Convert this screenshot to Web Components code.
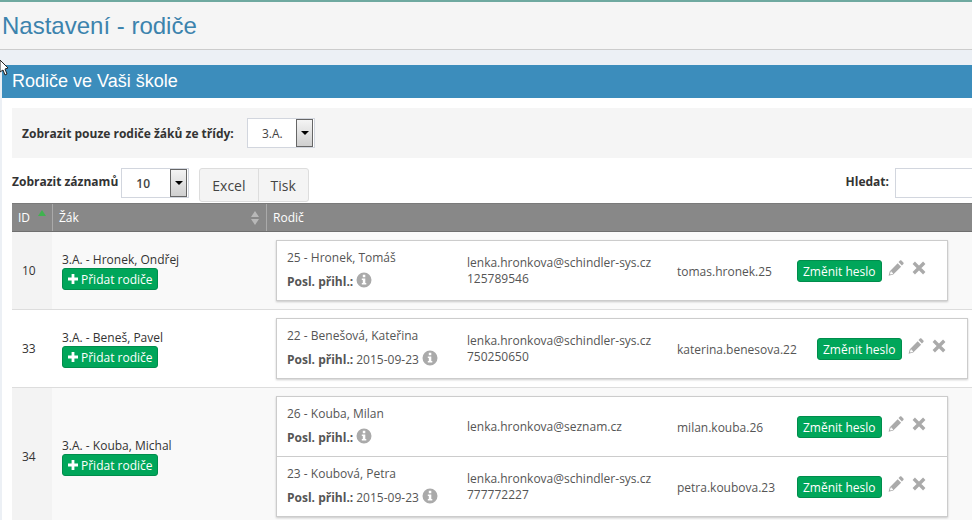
<!DOCTYPE html>
<html lang="cs">
<head>
<meta charset="utf-8">
<title>Nastavení - rodiče</title>
<style>
    html, body { margin: 0; height: 520px; overflow: hidden; background: #ecf0f5; }
    body { font: 12px "Open Sans", sans-serif; color: #333; position: relative; }
    .cursor { position: absolute; left: 0; top: 60px; z-index: 5; }
</style>
</head>
<body>
<svg class="cursor" width="10" height="18" viewBox="0 0 10 18"><path d="M0 0 L8 8 L5 9 L7 14 L5 15 L3 10 L0 12 Z" fill="#fff" stroke="#222" stroke-width="1"/></svg>
<page-title>Nastavení - rodiče</page-title>
<box-panel heading="Rodiče ve Vaši škole">
    <filter-bar label="Zobrazit pouze rodiče žáků ze třídy:" value="3.A."></filter-bar>
    <table-tools></table-tools>
    <parents-table>
        <student-row id-text="10" name="3.A. - Hronek, Ondřej" tone="odd">
            <parent-card login-width="120">
                <parent-line name="25 - Hronek, Tomáš" email="lenka.hronkova@schindler-sys.cz" phone="125789546" login="tomas.hronek.25"></parent-line>
            </parent-card>
        </student-row>
        <student-row id-text="33" name="3.A. - Beneš, Pavel" tone="even">
            <parent-card login-width="140">
                <parent-line name="22 - Benešová, Kateřina" last="2015-09-23" email="lenka.hronkova@schindler-sys.cz" phone="750250650" login="katerina.benesova.22"></parent-line>
            </parent-card>
        </student-row>
        <student-row id-text="34" name="3.A. - Kouba, Michal" tone="odd">
            <parent-card login-width="120">
                <parent-line name="26 - Kouba, Milan" email="lenka.hronkova@seznam.cz" login="milan.kouba.26"></parent-line>
                <parent-line name="23 - Koubová, Petra" last="2015-09-23" email="lenka.hronkova@schindler-sys.cz" phone="777772227" login="petra.koubova.23" divided></parent-line>
            </parent-card>
        </student-row>
    </parents-table>
</box-panel>

<script>
// shared icon markup
const ICONS = {
    plus: '<svg width="10" height="10" viewBox="0 0 10 10"><path d="M3.6 0h2.8v3.6H10v2.8H6.4V10H3.6V6.4H0V3.6h3.6z" fill="#fff"/></svg>',
    info: '<svg width="16" height="16" viewBox="0 0 16 16"><path fill-rule="evenodd" fill="#aaa" d="M8 .5a7.5 7.5 0 1 1 0 15a7.5 7.5 0 0 1 0-15zM6.800 2.800v2.400h2.500V2.800zM5.800 6.400v1.500h1v3H5.800v1.500h4.500v-1.500h-1V6.400z"/></svg>',
    pencil: '<svg width="16" height="16" viewBox="0 0 16 16"><path fill="#aaa" d="M12 .6c.5-.4 1-.4 1.400 0l2 2c.4.4.4.9 0 1.400l-1.500 1.500-3.400-3.400zM9.700 3.300l3.400 3.400-7.900 7.900-4.600 1.200 1.200-4.600zM2.700 11.400l-.7 2.600.5.500 2.600-.7-.3-1.100-1-.1-.1-1z"/></svg>',
    times: '<svg width="14" height="14" viewBox="0 0 14 14"><path d="M2.400 2.400l9.200 9.200M11.600 2.400l-9.200 9.200" stroke="#aaa" stroke-width="3.800" stroke-linecap="square" fill="none" transform="translate(7 7) scale(.88) translate(-7 -7)"/></svg>'
};

class PageTitle extends HTMLElement {
    constructor() {
        super();
        this.attachShadow({ mode: 'open' }).innerHTML = `
            <style>
                :host {
                    display: flex;
                    align-items: center;
                    box-sizing: border-box;
                    height: 50px;
                    padding: 1px 0 0 2px;
                    background: #f5f5f5;
                    border-top: 2px solid #6fa9a0;
                    border-bottom: 1px solid #ccc;
                    font: 24px "Liberation Sans", sans-serif;
                    color: #3c83ad;
                }
            </style>
            <slot></slot>`;
    }
}

class BoxPanel extends HTMLElement {
    constructor() {
        super();
        this.attachShadow({ mode: 'open' }).innerHTML = `
            <style>
                :host {
                    display: block;
                    margin: 15px 0 0 2px;
                    background: #fff;
                    height: 455px;
                }
                .head {
                    height: 33px;
                    display: flex;
                    align-items: center;
                    padding-left: 10px;
                    background: #3c8dbc;
                    color: #fff;
                    font: 18px "Liberation Sans", sans-serif;
                }
                .body { padding: 10px 0 0 10px; }
            </style>
            <div class="head">${this.getAttribute('heading')}</div>
            <div class="body"><slot></slot></div>`;
    }
}

class SelectBox extends HTMLElement {
    constructor() {
        super();
        this.attachShadow({ mode: 'open' }).innerHTML = `
            <style>
                :host {
                    display: flex;
                    box-sizing: border-box;
                    width: 68px;
                    height: 30px;
                    border: 1px solid #d2d6de;
                    background: #fff;
                    font-size: 12px;
                }
                .val { flex: 1; display: flex; align-items: center; padding-left: 14px; color: #444; }
                .btn {
                    width: 15px;
                    margin: 0 1px 0 0;
                    border: 1px solid #666;
                    background: linear-gradient(#f4f4f4, #cfcfcf);
                    display: flex;
                    align-items: center;
                    justify-content: center;
                }
                .btn i { border: 4px solid transparent; border-top: 4px solid #000; border-bottom: 0; }
            </style>
            <div class="val"><slot></slot></div>
            <div class="btn"><i></i></div>`;
    }
}

class FilterBar extends HTMLElement {
    constructor() {
        super();
        this.attachShadow({ mode: 'open' }).innerHTML = `
            <style>
                :host {
                    display: flex;
                    align-items: center;
                    height: 50px;
                    padding-left: 10px;
                    background: #f5f5f5;
                }
                b { font-size: 12px; width: 225px; color: #333; white-space: nowrap; }
            </style>
            <b>${this.getAttribute('label')}</b>
            <select-box>${this.getAttribute('value')}</select-box>`;
    }
}

class TableTools extends HTMLElement {
    constructor() {
        super();
        this.attachShadow({ mode: 'open' }).innerHTML = `
            <style>
                :host {
                    display: flex;
                    align-items: flex-start;
                    height: 35px;
                    padding-top: 10px;
                }
                b { font-size: 12px; color: #333; line-height: 27px; }
                select-box { margin-left: 3px; font-weight: 600; }
                .group {
                    display: flex;
                    height: 34px;
                    box-sizing: border-box;
                    margin-left: 10px;
                    border: 1px solid #ddd;
                    border-radius: 3px;
                    background: #f4f4f4;
                    font-size: 14px;
                    color: #444;
                }
                .group span { display: flex; align-items: center; padding: 0 12px; }
                .group span + span { border-left: 1px solid #ddd; }
                .search { margin-left: auto; display: flex; }
                .search input {
                    box-sizing: border-box;
                    width: 77px;
                    height: 30px;
                    margin: 0 0 0 6px;
                    border: 1px solid #d2d6de;
                    border-right: 0;
                    padding: 0;
                    background: #fff;
                }
            </style>
            <b>Zobrazit záznamů</b>
            <select-box>10</select-box>
            <div class="group"><span>Excel</span><span>Tisk</span></div>
            <div class="search"><b>Hledat:</b><input type="text"></div>`;
    }
}

class ParentsTable extends HTMLElement {
    constructor() {
        super();
        this.attachShadow({ mode: 'open' }).innerHTML = `
            <style>
                :host { display: block; }
                .head {
                    display: grid;
                    grid-template-columns: 40px 214px 1fr;
                    height: 29px;
                    box-sizing: border-box;
                    background: #888;
                    border-top: 1px solid #7a7a7a;
                    border-bottom: 1px solid #6f6f6f;
                    color: #fff;
                }
                .head div {
                    display: flex;
                    align-items: center;
                    justify-content: space-between;
                    padding: 0 6px;
                    border-left: 1px solid #aaa;
                    position: relative;
                }
                .head div:first-child { border-left: 0; }
                .up { position: absolute; left: 26px; top: 6px; border: 4px solid transparent; border-bottom: 6px solid #3fb34f; border-top: 0; }
                .both { display: flex; flex-direction: column; gap: 2px; margin-right: 1px; }
                .both i { border: 4px solid transparent; }
                .both i:first-child { border-bottom: 6px solid #b8b8b8; border-top: 0; }
                .both i:last-child { border-top: 6px solid #b8b8b8; border-bottom: 0; }
            </style>
            <div class="head">
                <div>ID<span class="up"></span></div>
                <div>Žák<span class="both"><i></i><i></i></span></div>
                <div>Rodič</div>
            </div>
            <slot></slot>`;
    }
}

class StudentRow extends HTMLElement {
    constructor() {
        super();
        const odd = this.getAttribute('tone') === 'odd';
        this.attachShadow({ mode: 'open' }).innerHTML = `
            <style>
                :host {
                    display: grid;
                    grid-template-columns: 40px 214px 1fr;
                    border-bottom: 1px solid #ddd;
                    background: ${odd ? '#f9f9f9' : '#fff'};
                }
                .id { display: flex; align-items: center; padding-left: 10px; background: ${odd ? '#f3f3f3' : '#fff'}; }
                .who { display: flex; flex-direction: column; justify-content: center; align-items: flex-start; padding: 1px 0 0 10px; }
                .who span { line-height: 16px; }
                .add {
                    display: flex;
                    align-items: center;
                    gap: 3px;
                    height: 22px;
                    box-sizing: border-box;
                    padding: 0 4px 0 5px;
                    background: #00a65a;
                    border: 1px solid #008d4c;
                    border-radius: 3px;
                    color: #fff;
                    font-size: 12px;
                }
                .cards { padding: 8px 0 8px 10px; display: flex; align-items: flex-start; }
            </style>
            <div class="id">${this.getAttribute('id-text')}</div>
            <div class="who"><span>${this.getAttribute('name')}</span><div class="add">${ICONS.plus}Přidat rodiče</div></div>
            <div class="cards"><slot></slot></div>`;
    }
}

class ParentCard extends HTMLElement {
    constructor() {
        super();
        this.attachShadow({ mode: 'open' }).innerHTML = `
            <style>
                :host {
                    display: block;
                    --login-width: ${this.getAttribute('login-width')}px;
                    background: #fff;
                    border: 1px solid #ccc;
                    box-shadow: 0 1px 2px rgba(0, 0, 0, .2);
                }
            </style>
            <slot></slot>`;
    }
}

class ParentLine extends HTMLElement {
    constructor() {
        super();
        const phone = this.getAttribute('phone');
        const last = this.getAttribute('last');
        this.attachShadow({ mode: 'open' }).innerHTML = `
            <style>
                :host {
                    display: grid;
                    grid-template-columns: 180px 210px var(--login-width) auto auto;
                    align-items: center;
                    box-sizing: border-box;
                    height: 59px;
                    padding: 0 21px 0 10px;
                    color: #555;
                }
                :host([divided]) { height: 60px; border-top: 1px solid #ccc; }
                .name { display: flex; flex-direction: column; gap: 7px; padding-bottom: 2px; }
                .last { display: flex; align-items: center; gap: 3px; }
                .last svg { margin-top: -3px; flex: none; }
                .mail, .login, .btn { margin-top: 1px; }
                .mail { line-height: 16.5px; }
                .btn {
                    display: flex;
                    align-items: center;
                    height: 22px;
                    box-sizing: border-box;
                    padding: 0 5px;
                    background: #00a65a;
                    border: 1px solid #008d4c;
                    border-radius: 3px;
                    color: #fff;
                    white-space: nowrap;
                }
                .tools { display: flex; gap: 8px; padding: 0 0 5px 6px; align-items: center; }
                .tools svg { flex: none; }
            </style>
            <div class="name">
                <span>${this.getAttribute('name')}</span>
                <span class="last"><b>Posl. přihl.:</b>${last ? ' ' + last : ''}${ICONS.info}</span>
            </div>
            <div class="mail">${this.getAttribute('email')}${phone ? '<br>' + phone : ''}</div>
            <div class="login">${this.getAttribute('login')}</div>
            <div class="btn">Změnit heslo</div>
            <div class="tools">${ICONS.pencil}${ICONS.times}</div>`;
    }
}

customElements.define('page-title', PageTitle);
customElements.define('box-panel', BoxPanel);
customElements.define('select-box', SelectBox);
customElements.define('filter-bar', FilterBar);
customElements.define('table-tools', TableTools);
customElements.define('parents-table', ParentsTable);
customElements.define('student-row', StudentRow);
customElements.define('parent-card', ParentCard);
customElements.define('parent-line', ParentLine);
</script>
</body>
</html>
